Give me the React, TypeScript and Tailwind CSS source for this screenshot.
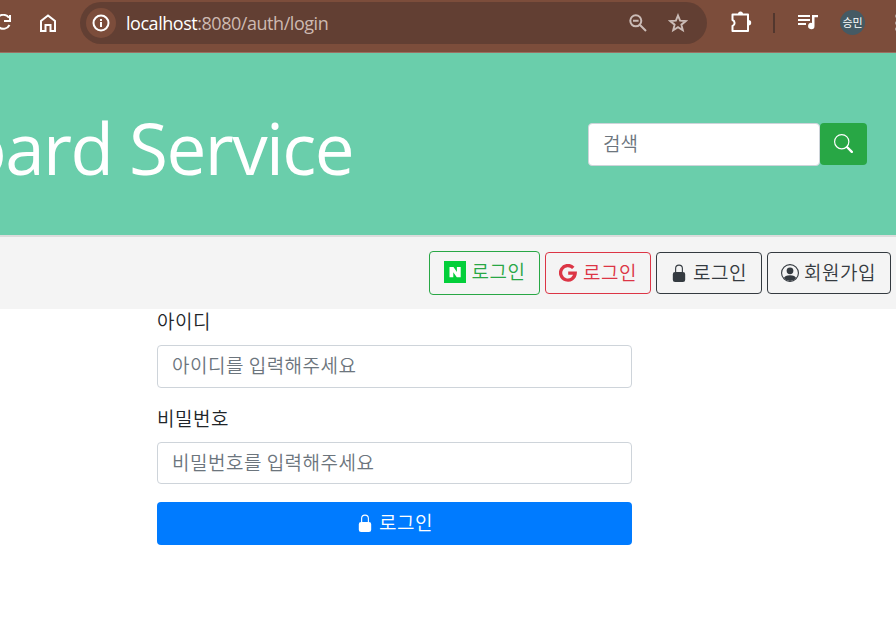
import React from "react";

const KR = "font-['Noto_Sans_CJK_KR',sans-serif] font-[350] text-[19px]";

function LockIcon() {
  return (
    <svg viewBox="0 0 16 16" className="-mt-px size-[18px] shrink-0" fill="currentColor">
      <path d="M2.5 9a2 2 0 0 1 2-2h7a2 2 0 0 1 2 2v5a2 2 0 0 1-2 2h-7a2 2 0 0 1-2-2V9z" />
      <path fillRule="evenodd" d="M4.5 4a3.5 3.5 0 1 1 7 0v3h-1V4a2.5 2.5 0 0 0-5 0v3h-1V4z" />
    </svg>
  );
}

function PersonIcon() {
  return (
    <svg viewBox="0 0 16 16" className="size-[18px] shrink-0" fill="currentColor">
      <path d="M13.468 12.37C12.758 11.226 11.195 10 8 10s-4.757 1.225-5.468 2.37A6.987 6.987 0 0 0 8 15a6.987 6.987 0 0 0 5.468-2.63z" />
      <path d="M8 9a3 3 0 1 0 0-6 3 3 0 0 0 0 6z" />
      <path fillRule="evenodd" d="M8 1a7 7 0 1 0 0 14A7 7 0 0 0 8 1zM0 8a8 8 0 1 1 16 0A8 8 0 0 1 0 8z" />
    </svg>
  );
}

function SearchIcon() {
  return (
    <svg viewBox="0 0 16 16" className="size-[19px]" fill="currentColor">
      <path d="M10.442 10.442a1 1 0 0 1 1.415 0l3.85 3.85a1 1 0 0 1-1.414 1.415l-3.85-3.85a1 1 0 0 1 0-1.415z" />
      <path fillRule="evenodd" d="M6.5 12a5.5 5.5 0 1 0 0-11 5.5 5.5 0 0 0 0 11zM13 6.5a6.5 6.5 0 1 1-13 0 6.5 6.5 0 0 1 13 0z" />
    </svg>
  );
}

function GoogleIcon() {
  return (
    <svg viewBox="0 0 18 18" className="size-[18px] shrink-0" fill="none" stroke="currentColor" strokeWidth="3.3">
      <path d="M14.300 3.900A7.300 7.300 0 1 0 16.200 9.200H9.200" />
    </svg>
  );
}

function NaverIcon() {
  return (
    <svg viewBox="0 0 22 22" className="-mt-[2px] size-[22px] shrink-0">
      <path fill="#03cf3a" d="M0 0h22v22H0z" />
      <path fill="#fff" d="M5.5 6h4l3.4 5V6h3.8v10.200h-3.900L9.300 11.200v5H5.500z" />
    </svg>
  );
}

function BrowserBar() {
  return (
    <div className="flex h-[53px] items-start border-b border-[#9b7062] bg-[#7c4d3b] text-white">
      <svg viewBox="0 0 16 18" className="mt-[14px] h-[18px] w-[11px] shrink-0" preserveAspectRatio="xMaxYMid slice" fill="none" stroke="currentColor" strokeWidth="2">
        <path d="M14 3.800A7 7 0 1 0 14.500 11" />
        <path d="M15 1v6H9" />
      </svg>
      <svg viewBox="0 0 16 18" className="ml-[29px] mt-[14px] h-[18px] w-4 shrink-0" fill="none" stroke="currentColor" strokeWidth="2">
        <path d="M1 17V7l7-5.500L15 7v10h-4.500v-6h-5v6z" />
      </svg>
      <div className="ml-6 mt-[2px] flex h-[42px] w-[627px] shrink-0 items-center rounded-full bg-[#623f33] pl-[6px] pr-[19px]">
        <div className="flex size-[30px] items-center justify-center rounded-full bg-[#7c4d3b]">
          <svg viewBox="0 0 18 18" className="size-[18px]" fill="none" stroke="currentColor" strokeWidth="2">
            <circle cx="9" cy="9" r="7.500" />
            <path d="M9 8v5M9 5v2" />
          </svg>
        </div>
        <div className="ml-[10px] whitespace-nowrap font-['Open_Sans',sans-serif] text-[18px] leading-6 tracking-[-0.46px] text-[#cdb9b1]">
          <span className="text-white">localhost</span>:8080/auth/login
        </div>
        <svg viewBox="0 0 18 18" className="ml-auto size-[18px] text-[#cbbcb7]" fill="none" stroke="currentColor" strokeWidth="2">
          <circle cx="6.800" cy="6.800" r="5.500" />
          <path d="M11 11l6 6M4 6.800h5.600" />
        </svg>
        <svg viewBox="0 0 20 20" className="ml-[21px] size-5 text-[#cbbcb7]" fill="none" stroke="currentColor" strokeWidth="1.900">
          <path d="M10 2.500l2.100 5.200 5.600.4-4.300 3.600 1.400 5.500-4.800-3-4.800 3 1.400-5.500L2.300 8.100l5.600-.4z" />
        </svg>
      </div>
      <svg viewBox="0 0 22 22" className="ml-6 mt-[11px] size-[22px] shrink-0" fill="none" stroke="currentColor" strokeWidth="2" strokeLinejoin="round">
        <path d="M1.500 3.500h15.500v16.500H1.500v-5a3.200 3.200 0 0 0 0-6z" />
        <path fill="currentColor" stroke="none" d="M7 3a2.500 2.500 0 0 1 5 0zM17.500 9a2.700 2.700 0 0 1 0 5.400z" />
      </svg>
      <div className="ml-5 mt-[13px] h-5 w-[2px] shrink-0 bg-[#52372e]" />
      <svg viewBox="0 0 20 18" className="ml-[23px] mt-[13px] h-[18px] w-5 shrink-0" fill="currentColor">
        <path d="M0 2h12v2H0zM0 6h12v2H0zM0 10h8v2H0zM14 2h6v2.200h-3.500v8.800a3.200 3.200 0 1 1-2.500-3.100z" />
      </svg>
      <div className="ml-[22px] mt-[10px] flex size-[25px] shrink-0 items-center justify-center rounded-full bg-[#455a64] font-['Noto_Sans_CJK_KR',sans-serif] text-[11px] leading-none">
        승민
      </div>
      <div className="ml-[30px] mt-[14px] flex h-[17px] w-1 flex-col justify-between overflow-hidden">
        <i className="size-1 shrink-0 rounded-full bg-[#b7a49c]" />
        <i className="size-1 shrink-0 rounded-full bg-[#b7a49c]" />
        <i className="size-1 shrink-0 rounded-full bg-[#b7a49c]" />
      </div>
    </div>
  );
}

function Field({ label, placeholder, type, id }: { label: string; placeholder: string; type: string; id: string }) {
  return (
    <div className="flex flex-col">
      <label htmlFor={id} className={`${KR} mb-[10px] h-[27px] leading-[26px] tracking-[0.5px] text-[#212529]`}>{label}</label>
      <input
        id={id}
        type={type}
        placeholder={placeholder}
        className={`${KR} ${type === "password" ? "mb-px h-[42px]" : "h-[43px]"} w-full rounded-[4px] border border-[#ced4da] px-[14px] pb-[4px] tracking-[0.5px] placeholder:text-[#6c757d]`}
      />
    </div>
  );
}

const navButton = `${KR} flex h-[42px] shrink-0 items-center justify-center rounded-[4px] border tracking-[0.5px]`;

export default function App() {
  return (
    <div className="h-[640px] w-[896px] overflow-hidden bg-white">
      <BrowserBar />
      <header className="flex h-[182px] items-center justify-between bg-[#6aceab] pr-[29px]">
        <div className="flex w-[353px] justify-end">
          <h1 className="whitespace-nowrap pt-[7px] font-['Open_Sans',sans-serif] text-[71px] leading-[100px] tracking-[-1.6px] text-white">Board Service</h1>
        </div>
        <div className="flex items-start">
          <input
            placeholder="검색"
            className={`${KR} h-[43px] w-[232px] rounded-[4px] border border-[#ced4da] bg-white px-[14px] pb-[3px] placeholder:text-[#6c757d]`}
          />
          <button className="flex h-[42px] w-[47px] items-center justify-center rounded-[4px] bg-[#28a745] text-white">
            <SearchIcon />
          </button>
        </div>
      </header>
      <nav className="flex h-[74px] items-center justify-end gap-[5px] border-t-2 border-[#dcdcdc] bg-[#f4f4f4] pr-[5px]">
        <button className={`${navButton} h-[44px] w-[111px] gap-[6px] border-[#28a745] text-[#28a745]`}>
          <NaverIcon /><span className="-mt-[3px]">로그인</span>
        </button>
        <button className={`${navButton} w-[106px] gap-[6px] border-[#dc3545] text-[#dc3545]`}>
          <GoogleIcon /><span className="-mt-[2px]">로그인</span>
        </button>
        <button className={`${navButton} w-[106px] gap-[5px] border-[#343a40] pr-px text-[#343a40]`}>
          <LockIcon /><span className="-mt-[2px]">로그인</span>
        </button>
        <button className={`${navButton} w-[124px] gap-[5px] border-[#343a40] pr-px text-[#343a40]`}>
          <PersonIcon /><span className="-mt-[2px]">회원가입</span>
        </button>
      </nav>
      <form className="ml-[157px] flex w-[475px] flex-col gap-[17px] -mt-px">
        <Field id="user" type="text" label="아이디" placeholder="아이디를 입력해주세요" />
        <Field id="pass" type="password" label="비밀번호" placeholder="비밀번호를 입력해주세요" />
        <button type="button" className={`${KR} flex h-[43px] items-center justify-center gap-[5px] rounded-[4px] bg-[#007bff] tracking-[0.5px] text-white`}>
          <LockIcon /><span className="-mt-[2px]">로그인</span>
        </button>
      </form>
    </div>
  );
}
